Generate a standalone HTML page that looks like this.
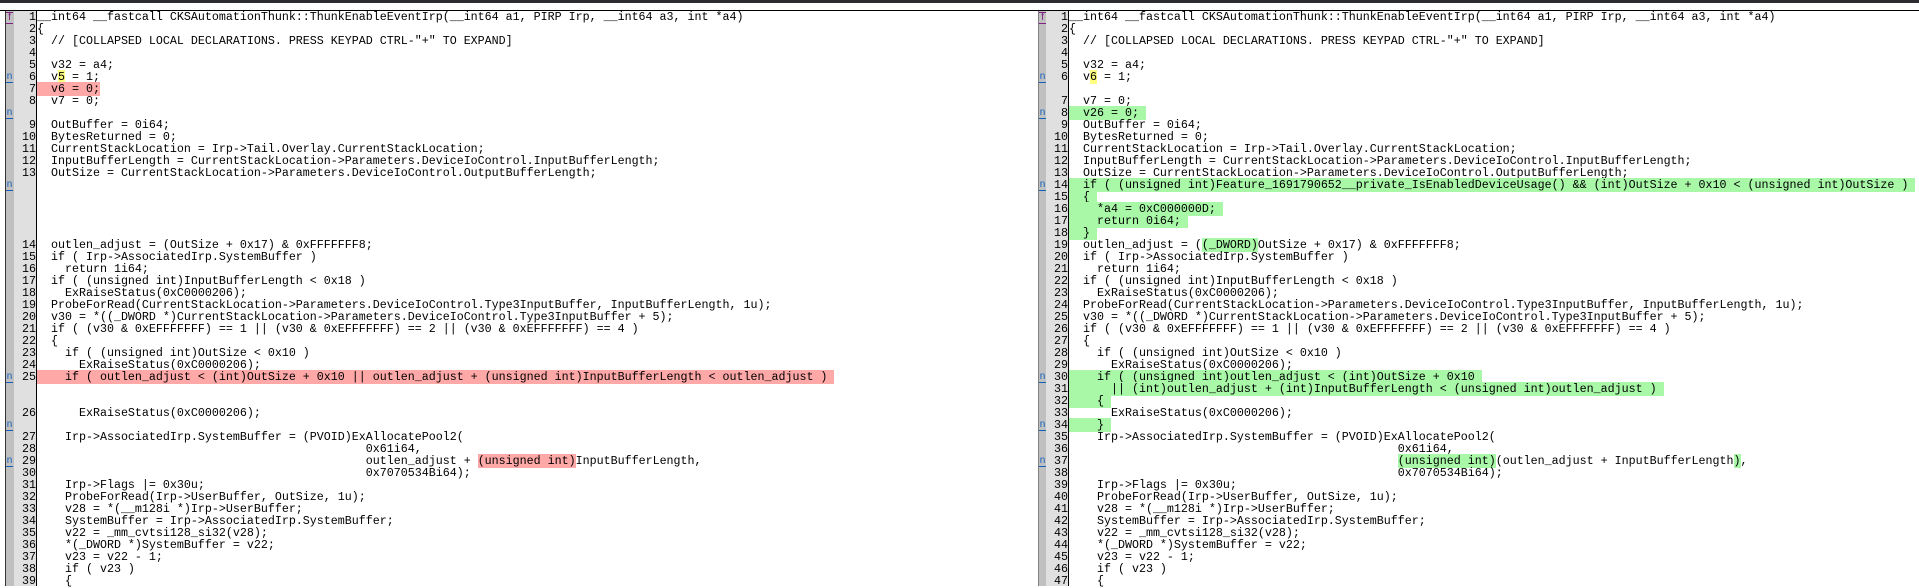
<!DOCTYPE html>
<html><head><meta charset="utf-8"><style>
body{margin:0;width:1919px;height:586px;background:#fff;overflow:hidden;position:relative;font-family:"Liberation Mono",monospace;font-size:11.67px;color:#000;}
.top{position:absolute;left:0;top:0;width:1919px;height:3px;background:#2b2b30;}
.hl{position:absolute;left:0;top:10px;width:1919px;height:1px;background:#000;}
.strip{position:absolute;top:11px;height:575px;width:8px;background:#c0c0c0;}
.gut{position:absolute;top:11px;height:575px;background:#e0e0e0;}
.sep{position:absolute;top:11px;height:575px;width:1px;background:#000;}
.nums{position:absolute;top:11px;text-align:right;white-space:pre;line-height:12px;}
.code{position:absolute;top:11px;white-space:pre;line-height:12px;}
.r{background:#ffa8a8;}
.g{background:#a8f8a8;}
.y{background:#ffff80;}
.mk{position:absolute;font-family:"Liberation Sans",sans-serif;font-size:10px;line-height:10px;width:7px;text-align:center;}
.mk.n{color:#1060c0;border-bottom:1px solid #1060c0;}
.mk.f{color:#802080;border-bottom:1px solid #802080;border-top:1px solid #802080;}
</style></head><body>
<div class="top"></div><div class="hl"></div>
<div style="position:absolute;left:5px;top:11px;width:1px;height:575px;background:#333"></div>
<div class="strip" style="left:6px"></div>
<div class="gut" style="left:14px;width:22px"></div>
<div class="sep" style="left:36px"></div>
<div style="position:absolute;left:1038px;top:11px;width:1px;height:575px;background:#808080"></div>
<div class="strip" style="left:1039px;width:7px"></div>
<div class="gut" style="left:1046px;width:22px"></div>
<div class="sep" style="left:1068px"></div>

<div class="mk f" style="left:6px;top:12px">f</div>
<div class="mk n" style="left:6px;top:72px">n</div>
<div class="mk n" style="left:6px;top:108px">n</div>
<div class="mk n" style="left:6px;top:180px">n</div>
<div class="mk n" style="left:6px;top:372px">n</div>
<div class="mk n" style="left:6px;top:420px">n</div>
<div class="mk n" style="left:6px;top:456px">n</div>
<div class="mk f" style="left:1039px;top:12px">f</div>
<div class="mk n" style="left:1039px;top:72px">n</div>
<div class="mk n" style="left:1039px;top:108px">n</div>
<div class="mk n" style="left:1039px;top:180px">n</div>
<div class="mk n" style="left:1039px;top:372px">n</div>
<div class="mk n" style="left:1039px;top:420px">n</div>
<div class="mk n" style="left:1039px;top:456px">n</div>

<div class="nums" style="left:14px;width:22px">1
2
3
4
5
6
7
8

9
10
11
12
13





14
15
16
17
18
19
20
21
22
23
24
25


26

27
28
29
30
31
32
33
34
35
36
37
38
39</div>
<div class="code" style="left:37px">__int64 __fastcall CKSAutomationThunk::ThunkEnableEventIrp(__int64 a1, PIRP Irp, __int64 a3, int *a4)
{
  // [COLLAPSED LOCAL DECLARATIONS. PRESS KEYPAD CTRL-"+" TO EXPAND]

  v32 = a4;
  v<span class="y">5</span> = 1;
<span class="r">  v6 = 0;</span>
  v7 = 0;

  OutBuffer = 0i64;
  BytesReturned = 0;
  CurrentStackLocation = Irp-&gt;Tail.Overlay.CurrentStackLocation;
  InputBufferLength = CurrentStackLocation-&gt;Parameters.DeviceIoControl.InputBufferLength;
  OutSize = CurrentStackLocation-&gt;Parameters.DeviceIoControl.OutputBufferLength;





  outlen_adjust = (OutSize + 0x17) &amp; 0xFFFFFFF8;
  if ( Irp-&gt;AssociatedIrp.SystemBuffer )
    return 1i64;
  if ( (unsigned int)InputBufferLength &lt; 0x18 )
    ExRaiseStatus(0xC0000206);
  ProbeForRead(CurrentStackLocation-&gt;Parameters.DeviceIoControl.Type3InputBuffer, InputBufferLength, 1u);
  v30 = *((_DWORD *)CurrentStackLocation-&gt;Parameters.DeviceIoControl.Type3InputBuffer + 5);
  if ( (v30 &amp; 0xEFFFFFFF) == 1 || (v30 &amp; 0xEFFFFFFF) == 2 || (v30 &amp; 0xEFFFFFFF) == 4 )
  {
    if ( (unsigned int)OutSize &lt; 0x10 )
      ExRaiseStatus(0xC0000206);
<span class="r">    if ( outlen_adjust &lt; (int)OutSize + 0x10 || outlen_adjust + (unsigned int)InputBufferLength &lt; outlen_adjust ) </span>


      ExRaiseStatus(0xC0000206);

    Irp-&gt;AssociatedIrp.SystemBuffer = (PVOID)ExAllocatePool2(
                                               0x61i64,
                                               outlen_adjust + <span class="r">(unsigned int)</span>InputBufferLength,
                                               0x7070534Bi64);
    Irp-&gt;Flags |= 0x30u;
    ProbeForRead(Irp-&gt;UserBuffer, OutSize, 1u);
    v28 = *(__m128i *)Irp-&gt;UserBuffer;
    SystemBuffer = Irp-&gt;AssociatedIrp.SystemBuffer;
    v22 = _mm_cvtsi128_si32(v28);
    *(_DWORD *)SystemBuffer = v22;
    v23 = v22 - 1;
    if ( v23 )
    {</div>

<div class="nums" style="left:1046px;width:22px">1
2
3
4
5
6

7
8
9
10
11
12
13
14
15
16
17
18
19
20
21
22
23
24
25
26
27
28
29
30
31
32
33
34
35
36
37
38
39
40
41
42
43
44
45
46
47</div>
<div class="code" style="left:1069px">__int64 __fastcall CKSAutomationThunk::ThunkEnableEventIrp(__int64 a1, PIRP Irp, __int64 a3, int *a4)
{
  // [COLLAPSED LOCAL DECLARATIONS. PRESS KEYPAD CTRL-"+" TO EXPAND]

  v32 = a4;
  v<span class="y">6</span> = 1;

  v7 = 0;
<span class="g">  v26 = 0; </span>
  OutBuffer = 0i64;
  BytesReturned = 0;
  CurrentStackLocation = Irp-&gt;Tail.Overlay.CurrentStackLocation;
  InputBufferLength = CurrentStackLocation-&gt;Parameters.DeviceIoControl.InputBufferLength;
  OutSize = CurrentStackLocation-&gt;Parameters.DeviceIoControl.OutputBufferLength;
<span class="g">  if ( (unsigned int)Feature_1691790652__private_IsEnabledDeviceUsage() &amp;&amp; (int)OutSize + 0x10 &lt; (unsigned int)OutSize ) </span>
<span class="g">  { </span>
<span class="g">    *a4 = 0xC000000D; </span>
<span class="g">    return 0i64; </span>
<span class="g">  } </span>
  outlen_adjust = (<span class="g">(_DWORD)</span>OutSize + 0x17) &amp; 0xFFFFFFF8;
  if ( Irp-&gt;AssociatedIrp.SystemBuffer )
    return 1i64;
  if ( (unsigned int)InputBufferLength &lt; 0x18 )
    ExRaiseStatus(0xC0000206);
  ProbeForRead(CurrentStackLocation-&gt;Parameters.DeviceIoControl.Type3InputBuffer, InputBufferLength, 1u);
  v30 = *((_DWORD *)CurrentStackLocation-&gt;Parameters.DeviceIoControl.Type3InputBuffer + 5);
  if ( (v30 &amp; 0xEFFFFFFF) == 1 || (v30 &amp; 0xEFFFFFFF) == 2 || (v30 &amp; 0xEFFFFFFF) == 4 )
  {
    if ( (unsigned int)OutSize &lt; 0x10 )
      ExRaiseStatus(0xC0000206);
<span class="g">    if ( (unsigned int)outlen_adjust &lt; (int)OutSize + 0x10 </span>
<span class="g">      || (int)outlen_adjust + (int)InputBufferLength &lt; (unsigned int)outlen_adjust ) </span>
<span class="g">    { </span>
      ExRaiseStatus(0xC0000206);
<span class="g">    } </span>
    Irp-&gt;AssociatedIrp.SystemBuffer = (PVOID)ExAllocatePool2(
                                               0x61i64,
                                               <span class="g">(unsigned int)</span>(outlen_adjust + InputBufferLength<span class="g">)</span>,
                                               0x7070534Bi64);
    Irp-&gt;Flags |= 0x30u;
    ProbeForRead(Irp-&gt;UserBuffer, OutSize, 1u);
    v28 = *(__m128i *)Irp-&gt;UserBuffer;
    SystemBuffer = Irp-&gt;AssociatedIrp.SystemBuffer;
    v22 = _mm_cvtsi128_si32(v28);
    *(_DWORD *)SystemBuffer = v22;
    v23 = v22 - 1;
    if ( v23 )
    {</div>
</body></html>
